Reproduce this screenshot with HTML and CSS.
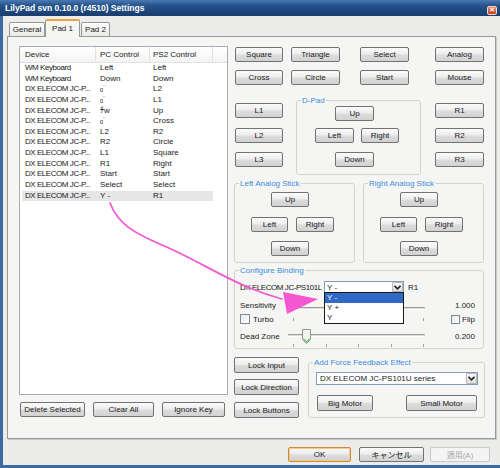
FILE: index.html
```html
<!DOCTYPE html>
<html lang="en">
<head>
    <meta charset="UTF-8">
    <meta name="viewport" content="width=device-width, initial-scale=1.0">
    <title>LilyPad svn 0.10.0 (r4510) Settings</title>
    <link rel="stylesheet" href="styles.css">
</head>
<body>

<div class="window">
    <div class="titlebar">
        <span class="title">LilyPad svn 0.10.0 (r4510) Settings</span>
        <span class="close">×</span>
    </div>

    <div class="client">
        <div class="tabs">
            <div class="tab t-general">General</div>
            <div class="tab t-pad1 active">Pad 1</div>
            <div class="tab t-pad2">Pad 2</div>
        </div>

        <div class="panel">
            <!-- binding list -->
            <div class="left-col">
                <div class="list">
                    <div class="list-head">
                        <div class="c1">Device</div>
                        <div class="c2">PC Control</div>
                        <div class="c3">PS2 Control</div>
                        <div class="c4"></div>
                    </div>
                    <div class="row"><div class="c1">WM Keyboard</div><div class="c2">Left</div><div class="c3">Left</div></div>
                    <div class="row"><div class="c1">WM Keyboard</div><div class="c2">Down</div><div class="c3">Down</div></div>
                    <div class="row"><div class="c1">DX ELECOM JC-P...</div><div class="c2">ₒ˙</div><div class="c3">L2</div></div>
                    <div class="row"><div class="c1">DX ELECOM JC-P...</div><div class="c2">ₒ˙</div><div class="c3">L1</div></div>
                    <div class="row"><div class="c1">DX ELECOM JC-P...</div><div class="c2">ﾁw</div><div class="c3">Up</div></div>
                    <div class="row"><div class="c1">DX ELECOM JC-P...</div><div class="c2">ₒ˙</div><div class="c3">Cross</div></div>
                    <div class="row"><div class="c1">DX ELECOM JC-P...</div><div class="c2">L2</div><div class="c3">R2</div></div>
                    <div class="row"><div class="c1">DX ELECOM JC-P...</div><div class="c2">R2</div><div class="c3">Circle</div></div>
                    <div class="row"><div class="c1">DX ELECOM JC-P...</div><div class="c2">L1</div><div class="c3">Square</div></div>
                    <div class="row"><div class="c1">DX ELECOM JC-P...</div><div class="c2">R1</div><div class="c3">Right</div></div>
                    <div class="row"><div class="c1">DX ELECOM JC-P...</div><div class="c2">Start</div><div class="c3">Start</div></div>
                    <div class="row"><div class="c1">DX ELECOM JC-P...</div><div class="c2">Select</div><div class="c3">Select</div></div>
                    <div class="row selected"><div class="c1">DX ELECOM JC-P...</div><div class="c2">Y -</div><div class="c3">R1</div></div>
                </div>
                <div class="list-buttons">
                    <button class="btn b-delete">Delete Selected</button>
                    <button class="btn b-clear">Clear All</button>
                    <button class="btn b-ignore">Ignore Key</button>
                </div>
            </div>

            <!-- pad buttons -->
            <div class="right-col">
                <div class="brow">
                    <button class="btn b-c1">Square</button>
                    <button class="btn b-c2">Triangle</button>
                    <button class="btn b-c3">Select</button>
                    <button class="btn b-c4">Analog</button>
                </div>
                <div class="brow second">
                    <button class="btn b-c1">Cross</button>
                    <button class="btn b-c2">Circle</button>
                    <button class="btn b-c3">Start</button>
                    <button class="btn b-c4">Mouse</button>
                </div>

                <div class="mid">
                    <div class="side left-side">
                        <button class="btn">L1</button>
                        <button class="btn">L2</button>
                        <button class="btn">L3</button>
                    </div>
                    <div class="group dpad">
                        <div class="group-title">D-Pad</div>
                        <button class="btn d-up">Up</button>
                        <div class="lr">
                            <button class="btn d-left">Left</button>
                            <button class="btn d-right">Right</button>
                        </div>
                        <button class="btn d-down">Down</button>
                    </div>
                    <div class="side right-side">
                        <button class="btn">R1</button>
                        <button class="btn">R2</button>
                        <button class="btn">R3</button>
                    </div>
                </div>

                <div class="analog">
                    <div class="group stick">
                        <div class="group-title">Left Analog Stick</div>
                        <button class="btn s-up">Up</button>
                        <div class="lr">
                            <button class="btn s-left">Left</button>
                            <button class="btn s-right">Right</button>
                        </div>
                        <button class="btn s-down">Down</button>
                    </div>
                    <div class="group stick">
                        <div class="group-title">Right Analog Stick</div>
                        <button class="btn s-up">Up</button>
                        <div class="lr">
                            <button class="btn s-left">Left</button>
                            <button class="btn s-right">Right</button>
                        </div>
                        <button class="btn s-down">Down</button>
                    </div>
                </div>

                <div class="group config">
                    <div class="group-title">Configure Binding</div>
                    <div class="bind-row">
                        <div class="bind-device">DX ELECOM JC-PS101L</div>
                        <div class="combo small">
                            <span class="combo-text">Y -</span>
                            <span class="combo-arrow"><svg width="7" height="5" viewBox="0 0 7 5"><path d="M0.5 0.8 L3.5 3.8 L6.5 0.8" fill="none" stroke="#222" stroke-width="1.6"/></svg></span>
                            <div class="dropdown">
                                <div class="opt on">Y -</div>
                                <div class="opt">Y +</div>
                                <div class="opt">Y</div>
                            </div>
                        </div>
                        <span class="bind-ps2">R1</span>
                    </div>
                    <div class="sliders">
                        <div class="lbl l-sens">Sensitivity</div>
                        <div class="slider s-sens">
                            <div class="track"></div>
                            <div class="ticks"><i></i><i></i><i></i><i></i><i></i></div>
                        </div>
                        <div class="val v-sens">1.000</div>
                        <label class="check c-turbo"><span class="box"></span>Turbo</label>
                        <label class="check c-flip"><span class="box"></span>Flip</label>
                        <div class="lbl l-dead">Dead Zone</div>
                        <div class="slider s-dead">
                            <div class="track"></div>
                            <svg class="thumb" style="left: 14px" width="9" height="15" viewBox="0 0 9 15">
                                <path d="M0.5 0.5 H8.5 V10.5 L4.5 14.5 L0.5 10.5 Z" fill="#f4f4f0" stroke="#8a9a8a"/>
                                <path d="M1.5 10 L4.5 13 L7.5 10" fill="none" stroke="#6cc36c" stroke-width="1.2"/>
                                <path d="M1.5 1.5 H7.5" stroke="#fff"/>
                            </svg>
                            <div class="ticks"><i></i><i></i><i></i><i></i><i></i></div>
                        </div>
                        <div class="val v-dead">0.200</div>
                    </div>
                </div>

                <div class="bottom">
                    <div class="locks">
                        <button class="btn">Lock Input</button>
                        <button class="btn">Lock Direction</button>
                        <button class="btn">Lock Buttons</button>
                    </div>
                    <div class="group ff">
                        <div class="group-title">Add Force Feedback Effect</div>
                        <div class="combo wide">
                            <span class="combo-text">DX ELECOM JC-PS101U series</span>
                            <span class="combo-arrow"><svg width="7" height="5" viewBox="0 0 7 5"><path d="M0.5 0.8 L3.5 3.8 L6.5 0.8" fill="none" stroke="#222" stroke-width="1.6"/></svg></span>
                        </div>
                        <div class="motors">
                            <button class="btn m-big">Big Motor</button>
                            <button class="btn m-small">Small Motor</button>
                        </div>
                    </div>
                </div>
            </div>
        </div>

        <div class="dialog-buttons">
            <button class="btn b-ok">OK</button>
            <button class="btn b-cancel jp">キャンセル</button>
            <button class="btn b-apply jp" disabled>適用(A)</button>
        </div>
    </div>

    <!-- hand-drawn annotation -->
    <svg class="annot" width="500" height="468" viewBox="0 0 500 468">
        <path d="M110 203 C118 224 134 233 162 245 C195 259 220 276 250 288 C262 293 271 296 282 299" fill="none" stroke="#f556d2" stroke-width="1.8" stroke-linecap="round"/>
        <polygon points="283,292 318,299 287,314" fill="#f556d2"/>
    </svg>
</div>

</body>
</html>
```

FILE: styles.css
```css
* { box-sizing: border-box; }
body { margin: 0; font-family: "Liberation Sans", Arial, sans-serif; font-size: 8px; color: #1a1a1a; }
button { font: inherit; color: inherit; margin: 0; }
.jp { font-family: "Liberation Sans", "Noto Sans CJK JP", sans-serif; }

.window { position: relative; width: 500px; height: 468px; display: flex; flex-direction: column; overflow: hidden; }

/* title bar */
.titlebar { height: 16px; flex: none; display: flex; align-items: center; justify-content: space-between; padding: 0 3px 0 5px; background: linear-gradient(#4b79b2, #25528b 35%, #183d6e); color: #fff; font-weight: bold; font-size: 8.5px; }
.close { width: 10px; height: 9px; margin-top: 5px; background: linear-gradient(#ef8d72, #c43d1c); border: 1px solid #f3d6cc; border-radius: 2px; font-size: 8px; line-height: 6px; text-align: center; font-weight: bold; }

.client { flex: 1; background: #ececea; border-left: 3px solid #3d6a9f; border-bottom: 3px solid #3d6a9f; padding-top: 3px; }

/* tabs */
.tabs { display: flex; align-items: flex-end; height: 17px; margin-left: 6px; position: relative; z-index: 1; }
.tab { height: 14px; border: 1px solid #919b9c; border-bottom: none; border-radius: 2px 2px 0 0; background: linear-gradient(#fefefe, #e9e9e5); line-height: 13px; text-align: center; }
.t-general { width: 36px; }
.t-pad1 { width: 35px; }
.t-pad2 { width: 29px; margin-left: 1px; }
.tab.active { height: 18px; margin-bottom: -1px; background: #f5f5f3; border-top: 2px solid #f0a23c; line-height: 15px; }

/* panel */
.panel { margin-left: 4px; width: 489px; height: 403px; border: 1px solid #919b9c; box-shadow: 1px 1px 0 #c9c9c5; background: #f5f5f3; display: flex; padding: 9px 0 0 11px; }

.btn { height: 15px; padding: 0; border: 1px solid #727272; border-radius: 2px; background: linear-gradient(#fbfbfb, #ececec 48%, #dcdcdc 52%, #d2d2d2); display: flex; align-items: center; justify-content: center; white-space: nowrap; }

/* list */
.left-col { width: 209px; }
.list { height: 349px; border: 1px solid #a5acb5; background: #fff; }
.list-head { height: 16px; display: flex; border-bottom: 1px solid #e3e3e3; background: linear-gradient(#fff, #f3f3f3); }
.list-head > div { line-height: 15px; border-right: 1px solid #e2e2e2; }
.row { display: flex; height: 10.65px; line-height: 10.65px; margin-left: 2px; width: 191px; white-space: nowrap; }
.row.selected { background: #e6e6e6; }
.list-head .c1 { width: 76px; padding-left: 5px; }
.row .c1 { width: 74px; padding-left: 3px; overflow: hidden; letter-spacing: -0.45px; }
.c2 { width: 54px; padding-left: 4px; }
.c3 { width: 63px; padding-left: 3px; }
.list-head .c4 { flex: 1; border-right: none; }

.list-buttons { display: flex; margin-top: 7px; }
.b-delete { width: 65px; margin-left: 1px; }
.b-clear { width: 61px; margin-left: 8px; }
.b-ignore { width: 63px; margin-left: 8px; }

/* right side */
.right-col { width: 251px; margin-left: 6px; padding-top: 1px; }
.brow { display: flex; }
.brow.second { margin-top: 8px; }
.b-c1 { width: 48px; margin-left: 1px; }
.b-c2 { width: 49px; margin-left: 8px; }
.b-c3 { width: 49px; margin-left: 20px; }
.b-c4 { width: 49px; margin-left: 26px; }

.group { border: 1px solid #d3d3cc; border-radius: 3px; }
.group-title { width: max-content; height: 11px; line-height: 11px; margin: -6px 0 0 4px; padding: 0 1px; background: #f5f5f3; color: #3c8ddb; }

.mid { display: flex; margin-top: 15px; height: 75px; }
.side { display: flex; flex-direction: column; width: 49px; padding-top: 3px; }
.side .btn:nth-child(2) { margin-top: 10px; }
.side .btn:nth-child(3) { margin-top: 9px; }
.left-side { margin-left: 1px; width: 48px; }
.right-side { margin-left: 14px; }
.dpad { width: 125px; height: 75px; margin-left: 13px; }
.lr { display: flex; }
.d-up, .d-down { width: 39px; margin-left: 38px; }
.dpad .lr { margin-top: 7px; }
.d-left { width: 39px; margin-left: 18px; }
.d-right { width: 38px; margin-left: 7px; }
.d-down { margin-top: 9px; }

.analog { display: flex; margin-top: 8px; }
.stick { width: 121px; height: 80px; }
.stick + .stick { margin-left: 8px; }
.s-up, .s-down { width: 38px; margin-left: 36px; }
.s-up { margin-top: 3px; }
.stick .lr { margin-top: 10px; }
.s-left { width: 37px; margin-left: 16px; }
.s-right { width: 38px; margin-left: 8px; }
.s-down { margin-top: 9px; }

/* configure binding */
.config { width: 250px; height: 79px; margin-top: 7px; }
.bind-row { display: flex; align-items: center; height: 12px; margin-top: 5px; padding-left: 5px; }
.bind-device { width: 84px; white-space: nowrap; letter-spacing: -0.45px; }
.bind-ps2 { margin-left: 4px; }

.combo { position: relative; display: flex; align-items: center; height: 12px; border: 1px solid #7f9db9; background: #fff; }
.combo.small { width: 80px; }
.combo-text { flex: 1; padding-left: 2px; white-space: nowrap; overflow: hidden; }
.combo-arrow { width: 11px; height: 10px; border: 1px solid #b5b5b5; border-radius: 1px; background: linear-gradient(#fafafa, #dedede); display: flex; align-items: center; justify-content: center; }
.dropdown { position: absolute; top: 10px; left: -1px; width: 80px; border: 1px solid #1a1a1a; background: #fff; z-index: 2; }
.opt { height: 10px; line-height: 10px; padding-left: 2px; }
.opt.on { background: #316ac5; color: #fff; }

.sliders { display: grid; grid-template-columns: 48px 137px 1fr; grid-template-rows: 13px 14px 18px 4px; margin-top: 6px; padding-left: 5px; }
.lbl, .val { line-height: 13px; }
.val { text-align: right; padding-right: 8px; }
.l-sens { grid-area: 1 / 1; }
.s-sens { grid-area: 1 / 2 / 3 / 3; }
.v-sens { grid-area: 1 / 3; }
.c-turbo { grid-area: 2 / 1; }
.c-flip { grid-area: 2 / 3; justify-self: end; margin-right: 8px; }
.l-dead { grid-area: 3 / 1; align-self: end; line-height: 14px; }
.s-dead { grid-area: 3 / 2 / 5 / 3; }
.v-dead { grid-area: 3 / 3; align-self: end; line-height: 14px; }

.slider { position: relative; }
.track { margin-top: 8px; height: 3px; border-top: 1px solid #9c9c9c; border-bottom: 1px solid #fff; background: #dcdcdc; border-radius: 1px; }
.ticks { display: flex; justify-content: space-between; padding: 0 1px 0 5px; margin-top: 8px; }
.s-dead .ticks { margin-top: 7px; }
.ticks i { width: 1px; height: 3px; background: #a0a0a0; }
.thumb { position: absolute; top: 3px; }

.check { display: flex; align-items: center; height: 14px; }
.box { width: 10px; height: 10px; margin-right: 3px; border: 1px solid #7a8a99; background: linear-gradient(135deg, #e8e8e4, #fff); }
.c-flip .box { width: 9px; height: 9px; margin-right: 2px; }

/* bottom */
.bottom { display: flex; margin-top: 8px; }
.locks { width: 65px; display: flex; flex-direction: column; }
.locks .btn { height: 16px; }
.locks .btn:nth-child(2) { margin-top: 6px; }
.locks .btn:nth-child(3) { margin-top: 7px; }
.ff { width: 177px; height: 56px; margin: 5px 0 0 9px; }
.combo.wide { width: 162px; height: 13px; margin: 4px 0 0 7px; }
.combo.wide .combo-text { padding-left: 3px; }
.combo.wide .combo-arrow { height: 11px; }
.motors { display: flex; margin-top: 10px; }
.motors .btn { height: 16px; }
.m-big { width: 56px; margin-left: 8px; }
.m-small { width: 71px; margin-left: 33px; }

/* dialog buttons */
.dialog-buttons { display: flex; justify-content: flex-end; margin-top: 8px; padding-right: 10px; }
.dialog-buttons .btn { height: 15px; }
.b-ok { width: 63px; border-color: #c98b3c; box-shadow: inset 0 0 0 1px #f6c88a; }
.b-cancel { width: 65px; margin-left: 8px; }
.b-apply { width: 60px; margin-left: 6px; border-color: #c8c8c8; background: #f4f4f4; color: #a6a6a6; }

.annot { position: absolute; left: 0; top: 0; pointer-events: none; }
```
